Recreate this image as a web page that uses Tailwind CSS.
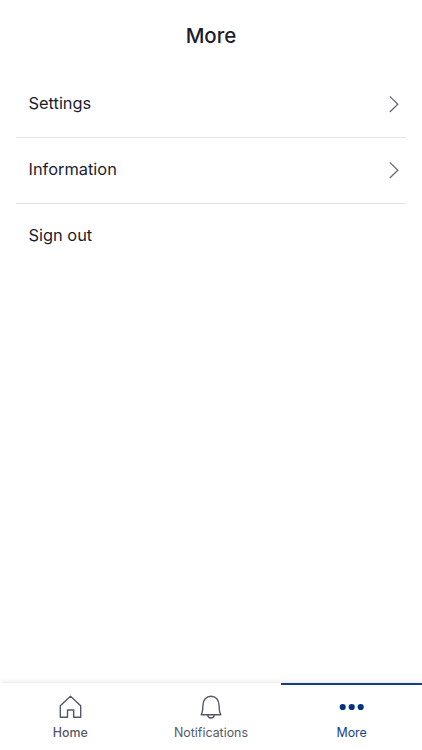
<!DOCTYPE html>
<html lang="en">
<head>
<meta charset="utf-8">
<meta name="viewport" content="width=device-width, initial-scale=1">
<title>More</title>
<script src="https://cdn.jsdelivr.net/npm/@tailwindcss/browser@4"></script>
</head>
<body class="bg-white font-['Inter',sans-serif] text-[#1b1d2e]">
<div class="flex h-[750px] w-full flex-col overflow-hidden">
  <header class="flex h-[71px] items-center justify-center">
    <h1 class="text-[20.5px] font-medium leading-6">More</h1>
  </header>
  <main class="flex-1 px-4">
    <ul class="text-[16.4px] leading-6">
      <li class="flex h-[67px] items-center justify-between border-b border-[#e3e3e5] pl-[12.5px] pr-1.5">
        <span class="pb-[3px]">Settings</span>
        <svg class="h-[18px] w-3" viewBox="0 0 12 18" fill="none" stroke="#686b76" stroke-width="1.3"><path d="M1.8 1.4 9.8 9.2 1.8 17"/></svg>
      </li>
      <li class="flex h-[66px] items-center justify-between border-b border-[#e3e3e5] pl-[12.5px] pr-1.5">
        <span class="pb-[3px]">Information</span>
        <svg class="mb-px h-[18px] w-3" viewBox="0 0 12 18" fill="none" stroke="#686b76" stroke-width="1.3"><path d="M1.8 1.4 9.8 9.2 1.8 17"/></svg>
      </li>
      <li class="flex h-[66px] items-center pl-[12.5px]"><span class="pb-1">Sign out</span></li>
    </ul>
  </main>
  <nav class="grid h-[67px] grid-cols-3 bg-white text-[12.4px] leading-4 text-[#555966] shadow-[0_-1px_5px_rgba(0,0,0,0.10)]">
    <a class="flex flex-col items-center border-t-2 border-transparent pt-[10px]">
      <svg class="h-6 w-6" viewBox="0 0 24 24" fill="none" stroke="currentColor" stroke-width="1.4" stroke-linejoin="round"><path d="M2.3 22.3V10.8L12.5 1.2l10.2 9.6v11.5h-7V15H9.5v7.3Z"/></svg>
      <span class="mt-[6px] font-medium">Home</span>
    </a>
    <a class="flex flex-col items-center border-t-2 border-transparent pt-[10px]">
      <svg class="h-6 w-6" viewBox="0 0 24 24" fill="none" stroke="currentColor" stroke-width="1.4" stroke-linejoin="round"><path d="M2.2 19.8c1.3-2.3 1.7-5.2 1.7-9.2C3.9 4.8 7.3 1.2 12 1.2s8.1 3.6 8.1 9.4c0 4 .4 6.9 1.7 9.2ZM8.6 19.8c.3 2 1.5 3.2 3.4 3.2s3.1-1.2 3.4-3.2"/></svg>
      <span class="mt-[6px]">Notifications</span>
    </a>
    <a class="flex flex-col items-center border-t-2 border-[#173f80] pt-[10px] text-[#173f80]">
      <svg class="h-6 w-6 overflow-visible" viewBox="0 0 24 24" fill="#003580"><circle cx="2.7" cy="12" r="3.1"/><circle cx="11.7" cy="12" r="3.1"/><circle cx="20.7" cy="12" r="3.1"/></svg>
      <span class="mt-[6px]">More</span>
    </a>
  </nav>
</div>
</body>
</html>
